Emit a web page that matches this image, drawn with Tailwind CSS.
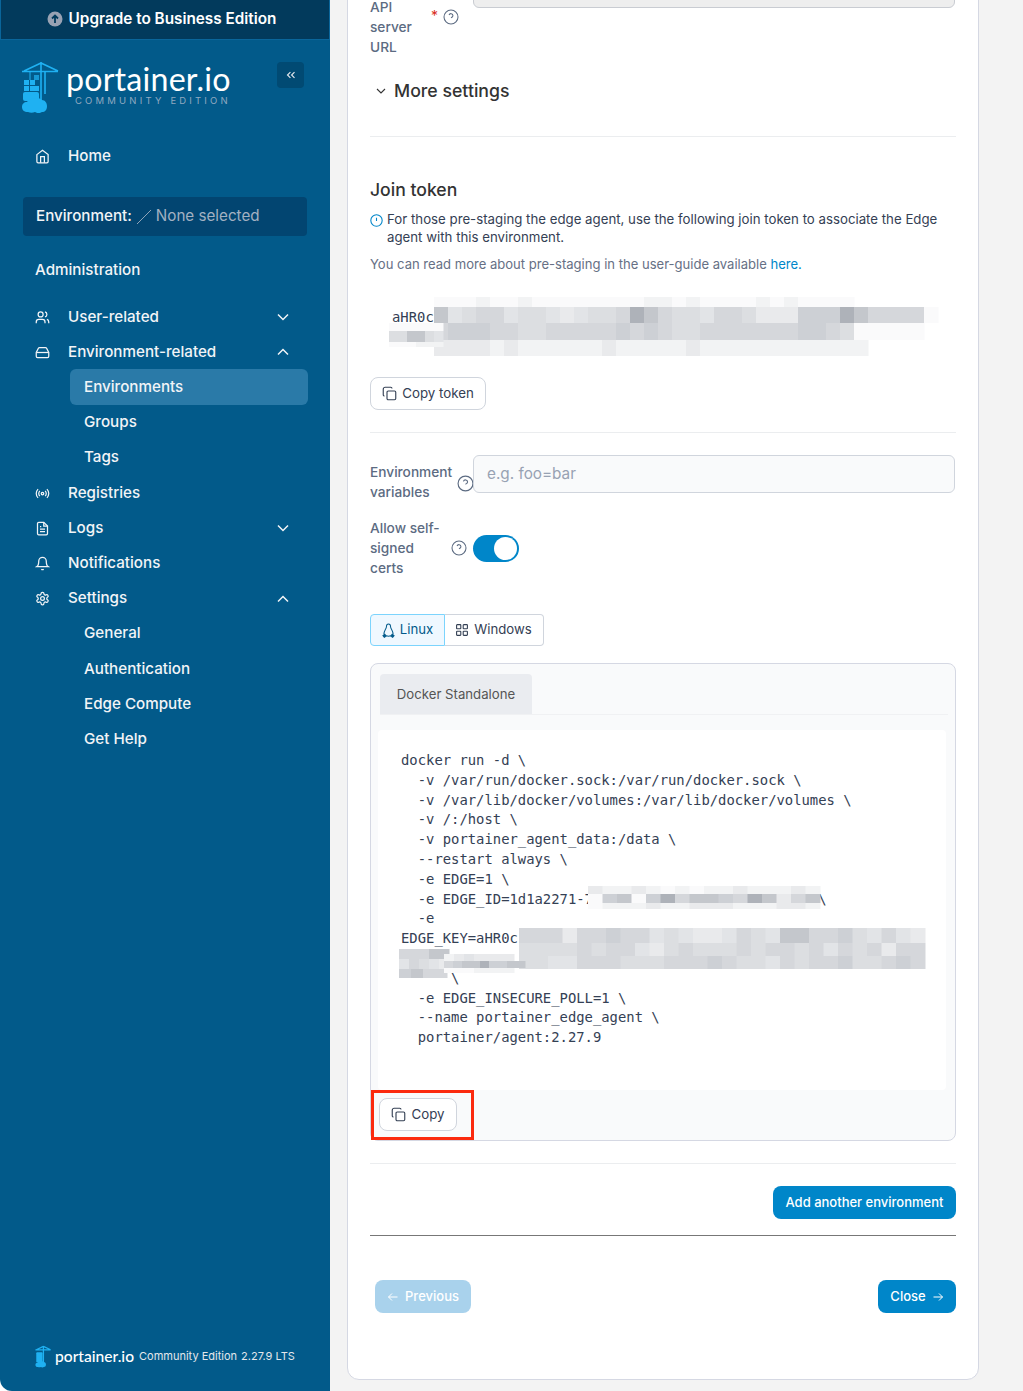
<!DOCTYPE html>
<html>
<head>
<meta charset="utf-8">
<script src="https://cdn.jsdelivr.net/npm/@tailwindcss/browser@4"></script>
</head>
<body class="bg-white font-['Inter','Noto_Sans',sans-serif]">
<div class="flex h-[1391px] w-[1023px] overflow-hidden bg-white">
  <!-- Sidebar -->
  <aside class="flex h-full w-[330px] shrink-0 flex-col rounded-bl-xl bg-[#025a8a] text-[15.2px] font-medium text-[#f2f4f7]">
    <div class="flex h-[40px] items-center justify-center gap-[6px] border border-[#0a659a] border-t-0 bg-[#023a5c] pb-[1px] pr-[7px] text-[15.3px] font-semibold text-white">
      <svg class="h-[16px] w-[16px]" viewBox="0 0 16 16"><circle cx="8" cy="8" r="7.500" fill="#98a2b3"/><path d="M8 12V5M5 7.500 8 4.600l3 2.900" fill="none" stroke="#023a5c" stroke-width="1.800"/></svg>
      <span>Upgrade to Business Edition</span>
    </div>
    <div class="relative h-[85px] shrink-0">
      <svg class="absolute left-[21px] top-[21px] h-[52px] w-[38px]" viewBox="0 0 38 52" fill="none">
        <path d="M1 10.500h36M20 1v38M20 2 3 10M20 2l17 8M24 11v22" stroke="#1fb1f2" stroke-width="1.600"/>
        <path d="M9 11v8" stroke="#1fb1f2" stroke-width="1"/>
        <rect x="3" y="19" width="5" height="5" fill="#1fb1f2"/><rect x="9" y="19" width="5" height="5" fill="#1fb1f2"/><rect x="13" y="14" width="5" height="5" fill="#1fb1f2" opacity=".7"/><rect x="9" y="25" width="9" height="5" fill="#1fb1f2"/><rect x="3" y="25" width="5" height="5" fill="#1fb1f2"/>
        <rect x="2" y="31" width="16" height="9" rx="2" fill="#1fb1f2"/>
        <path d="M7 51c-4 0-6-2-6-5s2-5 5-5c1-3 5-4 8-3 2-1 5-1 7 1 3 0 5 3 5 6 0 4-2 6-5 6-2 1.500-5 1.500-7 0-2 1-5 1-7 0z" fill="#1fb1f2"/>
      </svg>
      <div class="absolute left-[66px] top-[24px] font-['Lato'] text-[32.2px] leading-[30px] font-normal tracking-[0.2px] text-white">portainer.io</div>
      <div class="absolute left-[75px] top-[56px] font-['Inter'] text-[9.5px] leading-[10px] font-normal tracking-[3.18px] text-[#8fa9c0]">COMMUNITY EDITION</div>
      <div class="absolute left-[277px] top-[22px] flex h-[26px] w-[27px] items-center justify-center rounded-[4px] bg-[#014a73]">
        <svg class="h-[14px] w-[14px]" viewBox="0 0 24 24" fill="none" stroke="#e4e7ec" stroke-width="2"><path d="m11 17-5-5 5-5M18 17l-5-5 5-5"/></svg>
      </div>
    </div>
    <div class="flex h-[60px] shrink-0 items-center gap-[18px] pl-[35px] pt-[2px]">
      <svg class="h-[15px] w-[15px]" viewBox="0 0 24 24" fill="none" stroke="currentColor" stroke-width="2"><path d="M3 9l9-7 9 7v11a2 2 0 0 1-2 2H5a2 2 0 0 1-2-2z"/><path d="M9 22V12h6v10"/></svg>
      <span>Home</span>
    </div>
    <div class="mx-[23px] mt-[12px] flex h-[39px] w-[284px] shrink-0 items-center rounded-[4px] bg-[#024571] pl-[13px]">
      <span>Environment:</span>
      <svg class="mx-[4px] h-[16px] w-[16px]" viewBox="0 0 16 16" stroke="#8fa3b8" stroke-width="1"><path d="M1 15 15 1"/></svg>
      <span class="text-[#a3b1c2] font-normal">None selected</span>
    </div>
    <div class="mt-[17px] flex h-[35px] shrink-0 items-center pl-[35px]">Administration</div>
    <nav class="mt-[11.5px] flex flex-col">
      <div class="flex h-[35.2px] items-center pl-[35px] pr-[37px]">
        <svg class="mr-[18px] h-[15px] w-[15px]" viewBox="0 0 24 24" fill="none" stroke="currentColor" stroke-width="2"><path d="M16 21v-2a4 4 0 0 0-4-4H6a4 4 0 0 0-4 4v2"/><circle cx="9" cy="7" r="4"/><path d="M22 21v-2a4 4 0 0 0-3-3.870"/><path d="M16 3.130a4 4 0 0 1 0 7.750"/></svg>
        <span class="flex-1">User-related</span>
        <svg class="h-[20px] w-[20px]" viewBox="0 0 24 24" fill="none" stroke="currentColor" stroke-width="1.800"><path d="m6 9 6 6 6-6"/></svg>
      </div>
      <div class="flex h-[35.2px] items-center pl-[35px] pr-[37px]">
        <svg class="mr-[18px] h-[15px] w-[15px]" viewBox="0 0 24 24" fill="none" stroke="currentColor" stroke-width="2"><path d="M22 12H2"/><path d="M5.450 5.110 2 12v6a2 2 0 0 0 2 2h16a2 2 0 0 0 2-2v-6l-3.450-6.890A2 2 0 0 0 16.760 4H7.240a2 2 0 0 0-1.790 1.110z"/><path d="M6 16h.01M10 16h.01"/></svg>
        <span class="flex-1">Environment-related</span>
        <svg class="h-[20px] w-[20px]" viewBox="0 0 24 24" fill="none" stroke="currentColor" stroke-width="1.800"><path d="m18 15-6-6-6 6"/></svg>
      </div>
      <div class="ml-[70px] -mt-[0.5px] mb-[0.5px] flex h-[35.2px] w-[238px] items-center rounded-[6px] bg-[#2a7aa8] pl-[14px]">Environments</div>
      <div class="flex h-[35.2px] items-center pl-[84px]">Groups</div>
      <div class="flex h-[35.2px] items-center pl-[84px]">Tags</div>
      <div class="flex h-[35.2px] items-center pl-[35px] pr-[37px]">
        <svg class="mr-[18px] h-[15px] w-[15px]" viewBox="0 0 24 24" fill="none" stroke="currentColor" stroke-width="2"><circle cx="12" cy="12" r="2"/><path d="M16.240 7.760a6 6 0 0 1 0 8.490m-8.480-.01a6 6 0 0 1 0-8.490m11.310-2.820a10 10 0 0 1 0 14.140m-14.140 0a10 10 0 0 1 0-14.140"/></svg>
        <span class="flex-1">Registries</span>
      </div>
      <div class="flex h-[35.2px] items-center pl-[35px] pr-[37px]">
        <svg class="mr-[18px] h-[15px] w-[15px]" viewBox="0 0 24 24" fill="none" stroke="currentColor" stroke-width="2"><path d="M14 2H6a2 2 0 0 0-2 2v16a2 2 0 0 0 2 2h12a2 2 0 0 0 2-2V8z"/><path d="M14 2v6h6M16 13H8M16 17H8M10 9H8"/></svg>
        <span class="flex-1">Logs</span>
        <svg class="h-[20px] w-[20px]" viewBox="0 0 24 24" fill="none" stroke="currentColor" stroke-width="1.800"><path d="m6 9 6 6 6-6"/></svg>
      </div>
      <div class="flex h-[35.2px] items-center pl-[35px] pr-[37px]">
        <svg class="mr-[18px] h-[15px] w-[15px]" viewBox="0 0 24 24" fill="none" stroke="currentColor" stroke-width="2"><path d="M18 8A6 6 0 0 0 6 8c0 7-3 9-3 9h18s-3-2-3-9"/><path d="M13.730 21a2 2 0 0 1-3.460 0"/></svg>
        <span class="flex-1">Notifications</span>
      </div>
      <div class="flex h-[35.2px] items-center pl-[35px] pr-[37px]">
        <svg class="mr-[18px] h-[15px] w-[15px]" viewBox="0 0 24 24" fill="none" stroke="currentColor" stroke-width="2"><path d="M12.220 2h-.44a2 2 0 0 0-2 2v.18a2 2 0 0 1-1 1.730l-.43.25a2 2 0 0 1-2 0l-.15-.08a2 2 0 0 0-2.730.73l-.22.38a2 2 0 0 0 .73 2.730l.15.1a2 2 0 0 1 1 1.720v.51a2 2 0 0 1-1 1.740l-.15.09a2 2 0 0 0-.73 2.730l.22.38a2 2 0 0 0 2.730.73l.15-.08a2 2 0 0 1 2 0l.43.25a2 2 0 0 1 1 1.730V20a2 2 0 0 0 2 2h.44a2 2 0 0 0 2-2v-.18a2 2 0 0 1 1-1.730l.43-.25a2 2 0 0 1 2 0l.15.08a2 2 0 0 0 2.730-.73l.22-.39a2 2 0 0 0-.73-2.730l-.15-.08a2 2 0 0 1-1-1.740v-.5a2 2 0 0 1 1-1.740l.15-.09a2 2 0 0 0 .73-2.730l-.22-.38a2 2 0 0 0-2.730-.73l-.15.08a2 2 0 0 1-2 0l-.43-.25a2 2 0 0 1-1-1.730V4a2 2 0 0 0-2-2z"/><circle cx="12" cy="12" r="3"/></svg>
        <span class="flex-1">Settings</span>
        <svg class="h-[20px] w-[20px]" viewBox="0 0 24 24" fill="none" stroke="currentColor" stroke-width="1.800"><path d="m18 15-6-6-6 6"/></svg>
      </div>
      <div class="flex h-[35.2px] items-center pl-[84px]">General</div>
      <div class="flex h-[35.2px] items-center pl-[84px]">Authentication</div>
      <div class="flex h-[35.2px] items-center pl-[84px]">Edge Compute</div>
      <div class="flex h-[35.2px] items-center pl-[84px]">Get Help</div>
    </nav>
    <div class="mt-auto mb-[22px] flex items-center pl-[35px]">
      <svg class="mr-[4px] h-[25px] w-[16px]" viewBox="0 0 38 52" fill="none"><path d="M1 10.500h36M20 1v38M20 2 3 10M20 2l17 8" stroke="#1fb1f2" stroke-width="3"/><rect x="3" y="16" width="15" height="24" rx="2" fill="#1fb1f2"/><path d="M7 51c-4 0-6-2-6-5s2-5 5-5c1-3 5-4 8-3 2-1 5-1 7 1 3 0 5 3 5 6 0 4-2 6-5 6-2 1.500-5 1.500-7 0-2 1-5 1-7 0z" fill="#1fb1f2"/></svg>
      <span class="mr-[5px] font-['Lato'] text-[15.6px] font-medium text-white">portainer.io</span>
      <span class="mr-[4px] text-[11px] font-normal text-[#e4e7ec]">Community Edition</span>
      <span class="text-[11px] font-normal text-[#e4e7ec]">2.27.9 LTS</span>
    </div>
  </aside>

  <!-- Main -->
  <main class="h-full flex-1 bg-[#f3f3f3] pl-[17px]">
    <div class="relative -mt-[11px] h-[1391px] w-[632px] rounded-br-xl rounded-bl-xl border border-[#d5d8e3] bg-white px-[22px] text-[13.2px] text-[#344054]">
      <!-- API server URL -->
      <div class="flex h-[70px]">
        <div class="w-[61px] pt-[7px] text-[13.7px] leading-[20px] font-medium text-[#5c6b82]">API server URL</div>
        <div class="flex h-[24px] w-[42px] pt-[19px] text-[#d92d20]"><span class="text-[14px] leading-[14px]">*</span>
          <svg class="ml-[5px] h-[16px] w-[16px] shrink-0" viewBox="0 0 24 24" fill="none" stroke="#5c6b82" stroke-width="1.600"><circle cx="12" cy="12" r="10.500"/><path d="M9.090 9a3 3 0 0 1 5.830 1c0 2-3 3-3 3M12 17h.01"/></svg>
        </div>
        <div class="h-[18px] w-[482px] rounded-b-[6px] border border-[#c9ccd2] bg-[#eeeeee]"></div>
      </div>
      <!-- More settings -->
      <div class="mt-[19px] flex h-[24px] items-center pl-[5px] text-[17.7px] font-medium text-[#333]">
        <svg class="mr-[7px] h-[12px] w-[12px]" viewBox="0 0 24 24" fill="none" stroke="#333" stroke-width="2.200"><path d="m4 8 8 8 8-8"/></svg>
        <span>More settings</span>
      </div>
      <div class="mt-[33px] h-px w-[586px] bg-[#ebedef]"></div>
      <h2 class="mt-[41px] text-[17.6px] leading-[24px] font-medium text-[#333]">Join token</h2>
      <div class="mt-[8px] flex text-[13.25px] leading-[18px] text-[#344054]">
        <svg class="mr-[4px] mt-[4px] h-[13px] w-[13px] shrink-0" viewBox="0 0 24 24" fill="none" stroke="#0086c9" stroke-width="2"><circle cx="12" cy="12" r="10.500"/><path d="M12 7v6M12 16.500h.01"/></svg>
        <p>For those pre-staging the edge agent, use the following join token to associate the Edge agent with this environment.</p>
      </div>
      <p class="mt-[9px] text-[13.05px] leading-[18px] text-[#667085]">You can read more about pre-staging in the user-guide available <span class="text-[#0086c9]">here.</span></p>
      <!-- Token -->
      <div class="relative mt-[24px] h-[80px]">
        <div class="pl-[22px] pt-[10px] font-['DejaVu_Sans_Mono'] text-[13.86px] leading-[20px] text-[#344054]">aHR0c</div>
        <svg id="m1" class="absolute left-0 top-0" width="586" height="80"></svg>
      </div>
      <button class="flex h-[33px] w-[116px] items-center justify-center gap-[5px] rounded-[8px] border border-[#d0d5dd] bg-white text-[13.3px] text-[#344054]">
        <svg class="h-[15px] w-[15px]" viewBox="0 0 24 24" fill="none" stroke="#344054" stroke-width="1.800"><rect x="8" y="8" width="14" height="14" rx="2"/><path d="M4 16a2 2 0 0 1-2-2V5a3 3 0 0 1 3-3h9a2 2 0 0 1 2 2"/></svg>
        Copy token
      </button>
      <div class="mt-[22px] h-px w-[586px] bg-[#ebedef]"></div>
      <!-- Env vars -->
      <div class="mt-[22px] flex h-[38px]">
        <div class="w-[86px] pt-[7px] text-[13.7px] leading-[20px] font-medium text-[#5c6b82]">Environment variables</div>
        <svg class="mt-[20px] ml-[1px] -mr-[1px] h-[17px] w-[17px] shrink-0" viewBox="0 0 24 24" fill="none" stroke="#5c6b82" stroke-width="1.600"><circle cx="12" cy="12" r="10.500"/><path d="M9.090 9a3 3 0 0 1 5.830 1c0 2-3 3-3 3M12 17h.01"/></svg>
        <div class="flex h-[38px] w-[482px] items-center rounded-[6px] border border-[#d0d5dd] bg-[#f9fafb] pl-[13px] text-[15.3px] text-[#98a2b3]">e.g. foo=bar</div>
      </div>
      <!-- Self signed -->
      <div class="mt-[25px] flex h-[60px]">
        <div class="w-[80px] text-[13.7px] leading-[20px] font-medium text-[#5c6b82]">Allow self-signed certs</div>
        <svg class="mt-[22px] ml-[1px] h-[16px] w-[16px] shrink-0" viewBox="0 0 24 24" fill="none" stroke="#5c6b82" stroke-width="1.600"><circle cx="12" cy="12" r="10.500"/><path d="M9.090 9a3 3 0 0 1 5.830 1c0 2-3 3-3 3M12 17h.01"/></svg>
        <div class="ml-[6px] mt-[17px] flex h-[27px] w-[46px] items-center justify-end rounded-full bg-[#0086c9] pr-[2px]"><div class="h-[23px] w-[23px] rounded-full bg-white"></div></div>
      </div>
      <!-- Button group -->
      <div class="mt-[36px] flex h-[32px] w-[174px] text-[13.2px]">
        <div class="flex w-[75px] items-center justify-center gap-[5px] rounded-l-[4px] border border-[#7cd4fd] bg-[#eff8ff] text-[#025a8a]">
          <svg class="h-[15px] w-[13px]" viewBox="0 0 14 16" fill="none" stroke="#025a8a" stroke-width="1.100"><path d="M7 1c-1.600 0-2.200 1.300-2.200 2.800 0 1.500-.6 2.300-1.400 3.600C2.500 9 2 10.500 2 12M7 1c1.600 0 2.200 1.300 2.200 2.800 0 1.500.6 2.300 1.400 3.600.9 1.600 1.400 3.100 1.400 4.600M4.500 13.500c1.500.7 3.500.7 5 0"/><path d="M1 13.500l2-1.500 1.500 2-2 1.300zM13 13.500 11 12l-1.500 2 2 1.300z" fill="#025a8a"/></svg>
          Linux
        </div>
        <div class="flex flex-1 items-center justify-center gap-[6px] rounded-r-[4px] border border-l-0 border-[#d0d5dd] bg-white text-[#344054]">
          <svg class="h-[12px] w-[12px]" viewBox="0 0 12 12" fill="none" stroke="#344054" stroke-width="1.100"><rect x=".6" y=".6" width="4.200" height="4.200" rx=".6"/><rect x="7.200" y=".6" width="4.200" height="4.200" rx=".6"/><rect x=".6" y="7.200" width="4.200" height="4.200" rx=".6"/><rect x="7.200" y="7.200" width="4.200" height="4.200" rx=".6"/></svg>
          Windows
        </div>
      </div>
      <!-- Box -->
      <div class="relative mt-[17px] h-[478px] w-[586px] rounded-[8px] border border-[#d5d8e3] bg-[#f9fafb] px-[7px] pt-[10px]">
        <div class="ml-[2px] border-b border-[#f0f1f3]">
          <div class="flex h-[40px] w-[152px] items-center justify-center rounded-t-[4px] bg-[#eaecf0] pt-[1px] text-[13.2px] text-[#555]">Docker Standalone</div>
        </div>
        <div class="relative mt-[15px] h-[360px] w-[568px] rounded-[4px] bg-white">
          <pre class="pl-[23px] pt-[21px] font-['DejaVu_Sans_Mono'] text-[13.86px] leading-[19.8px] text-[#344054]">docker run -d \
  -v /var/run/docker.sock:/var/run/docker.sock \
  -v /var/lib/docker/volumes:/var/lib/docker/volumes \
  -v /:/host \
  -v portainer_agent_data:/data \
  --restart always \
  -e EDGE=1 \
  -e EDGE_ID=1d1a2271-7                           \
  -e
EDGE_KEY=aHR0c

      \
  -e EDGE_INSECURE_POLL=1 \
  --name portainer_edge_agent \
  portainer/agent:2.27.9</pre>
          <svg id="m2" class="absolute left-0 top-0" width="568" height="360"></svg>
        </div>
        <button class="mt-[8px] ml-[1px] flex h-[33px] w-[78px] items-center justify-center gap-[5px] rounded-[8px] border border-[#d0d5dd] bg-white text-[13.3px] text-[#344054]">
          <svg class="h-[15px] w-[15px]" viewBox="0 0 24 24" fill="none" stroke="#344054" stroke-width="1.800"><rect x="8" y="8" width="14" height="14" rx="2"/><path d="M4 16a2 2 0 0 1-2-2V5a3 3 0 0 1 3-3h9a2 2 0 0 1 2 2"/></svg>
          Copy
        </button>
        <div class="absolute left-0 top-[426px] h-[50px] w-[103px] border-[3px] border-[#fb2a0e]"></div>
      </div>
      <div class="mt-[22px] h-px w-[586px] bg-[#ebedef]"></div>
      <div class="mt-[22px] flex justify-end">
        <button class="h-[33px] w-[183px] rounded-[8px] bg-[#0086c9] text-[13px] font-medium text-white">Add another environment</button>
      </div>
      <div class="mt-[16px] h-px w-[586px] bg-[#777]"></div>
      <div class="mt-[44px] flex items-center justify-between pl-[5px]">
        <button class="flex h-[33px] w-[96px] items-center justify-center gap-[6px] rounded-[8px] bg-[#a9d2ec] text-[13px] font-medium text-white">
          <svg class="h-[12px] w-[12px]" viewBox="0 0 24 24" fill="none" stroke="#fff" stroke-width="2"><path d="M21 12H3M10 5l-7 7 7 7"/></svg>Previous
        </button>
        <button class="flex h-[33px] w-[78px] items-center justify-center gap-[6px] rounded-[8px] bg-[#0086c9] text-[13px] font-medium text-white">
          Close<svg class="h-[12px] w-[12px]" viewBox="0 0 24 24" fill="none" stroke="#fff" stroke-width="2"><path d="M3 12h18M14 5l7 7-7 7"/></svg>
        </button>
      </div>
    </div>
  </main>
</div>
<script>
  var shades = {1:'#fafafb',2:'#f2f3f4',3:'#e9eaec',4:'#e2e4e7',5:'#dcdee1',6:'#d5d7db',7:'#cdd0d5',8:'#c4c7cc',9:'#aeb2b9'};
  function mosaic(id, rows) {
    var svg = document.getElementById(id), out = '';
    rows.forEach(function (r) {
      for (var i = 0; i < r[4].length; i++) {
        var c = r[4][i];
        if (c !== '0') out += '<rect x="' + (r[0] + i * r[2]) + '" y="' + r[1] + '" width="' + (r[2] + .5) + '" height="' + r[3] + '" fill="' + shades[c] + '"/>';
      }
    });
    svg.innerHTML = out;
  }
  mosaic('m1', [
    [64, -3, 14, 13, '11121121111111122121111212111100'],
    [64, 10, 14, 16, '845664554345569865546653337779866661'],
    [64, 26, 14, 17, '67776655666667676556666666776511111'],
    [64, 43, 14, 16, '3333232222223222223222222222222'],
    [19, 26, 9, 8, '111111'],
    [19, 34, 9, 11, '558854'],
    [19, 45, 9, 5, '111222']
  ]);
  mosaic('m2', [
    [210, 156, 14.5, 8, '3223212122322232'],
    [210, 164, 14.5, 9, '1781796887698368'],
    [210, 173, 14.5, 6, '1222322333222332'],
    [141, 198, 14.5, 15, '6663667664543346548866754643'],
    [141, 213, 14.5, 13, '5555656643565556566564656366'],
    [141, 226, 14.5, 13, '5544666555666765546566755676'],
    [21, 219, 10, 10, '66688'],
    [21, 229, 10, 10, '46543'],
    [21, 239, 12, 9, '7866'],
    [66, 224, 10, 7, '2343333'],
    [66, 231, 9, 7, '678897788'],
    [66, 238, 10, 5, '1112222']
  ]);
</script>
</body>
</html>
